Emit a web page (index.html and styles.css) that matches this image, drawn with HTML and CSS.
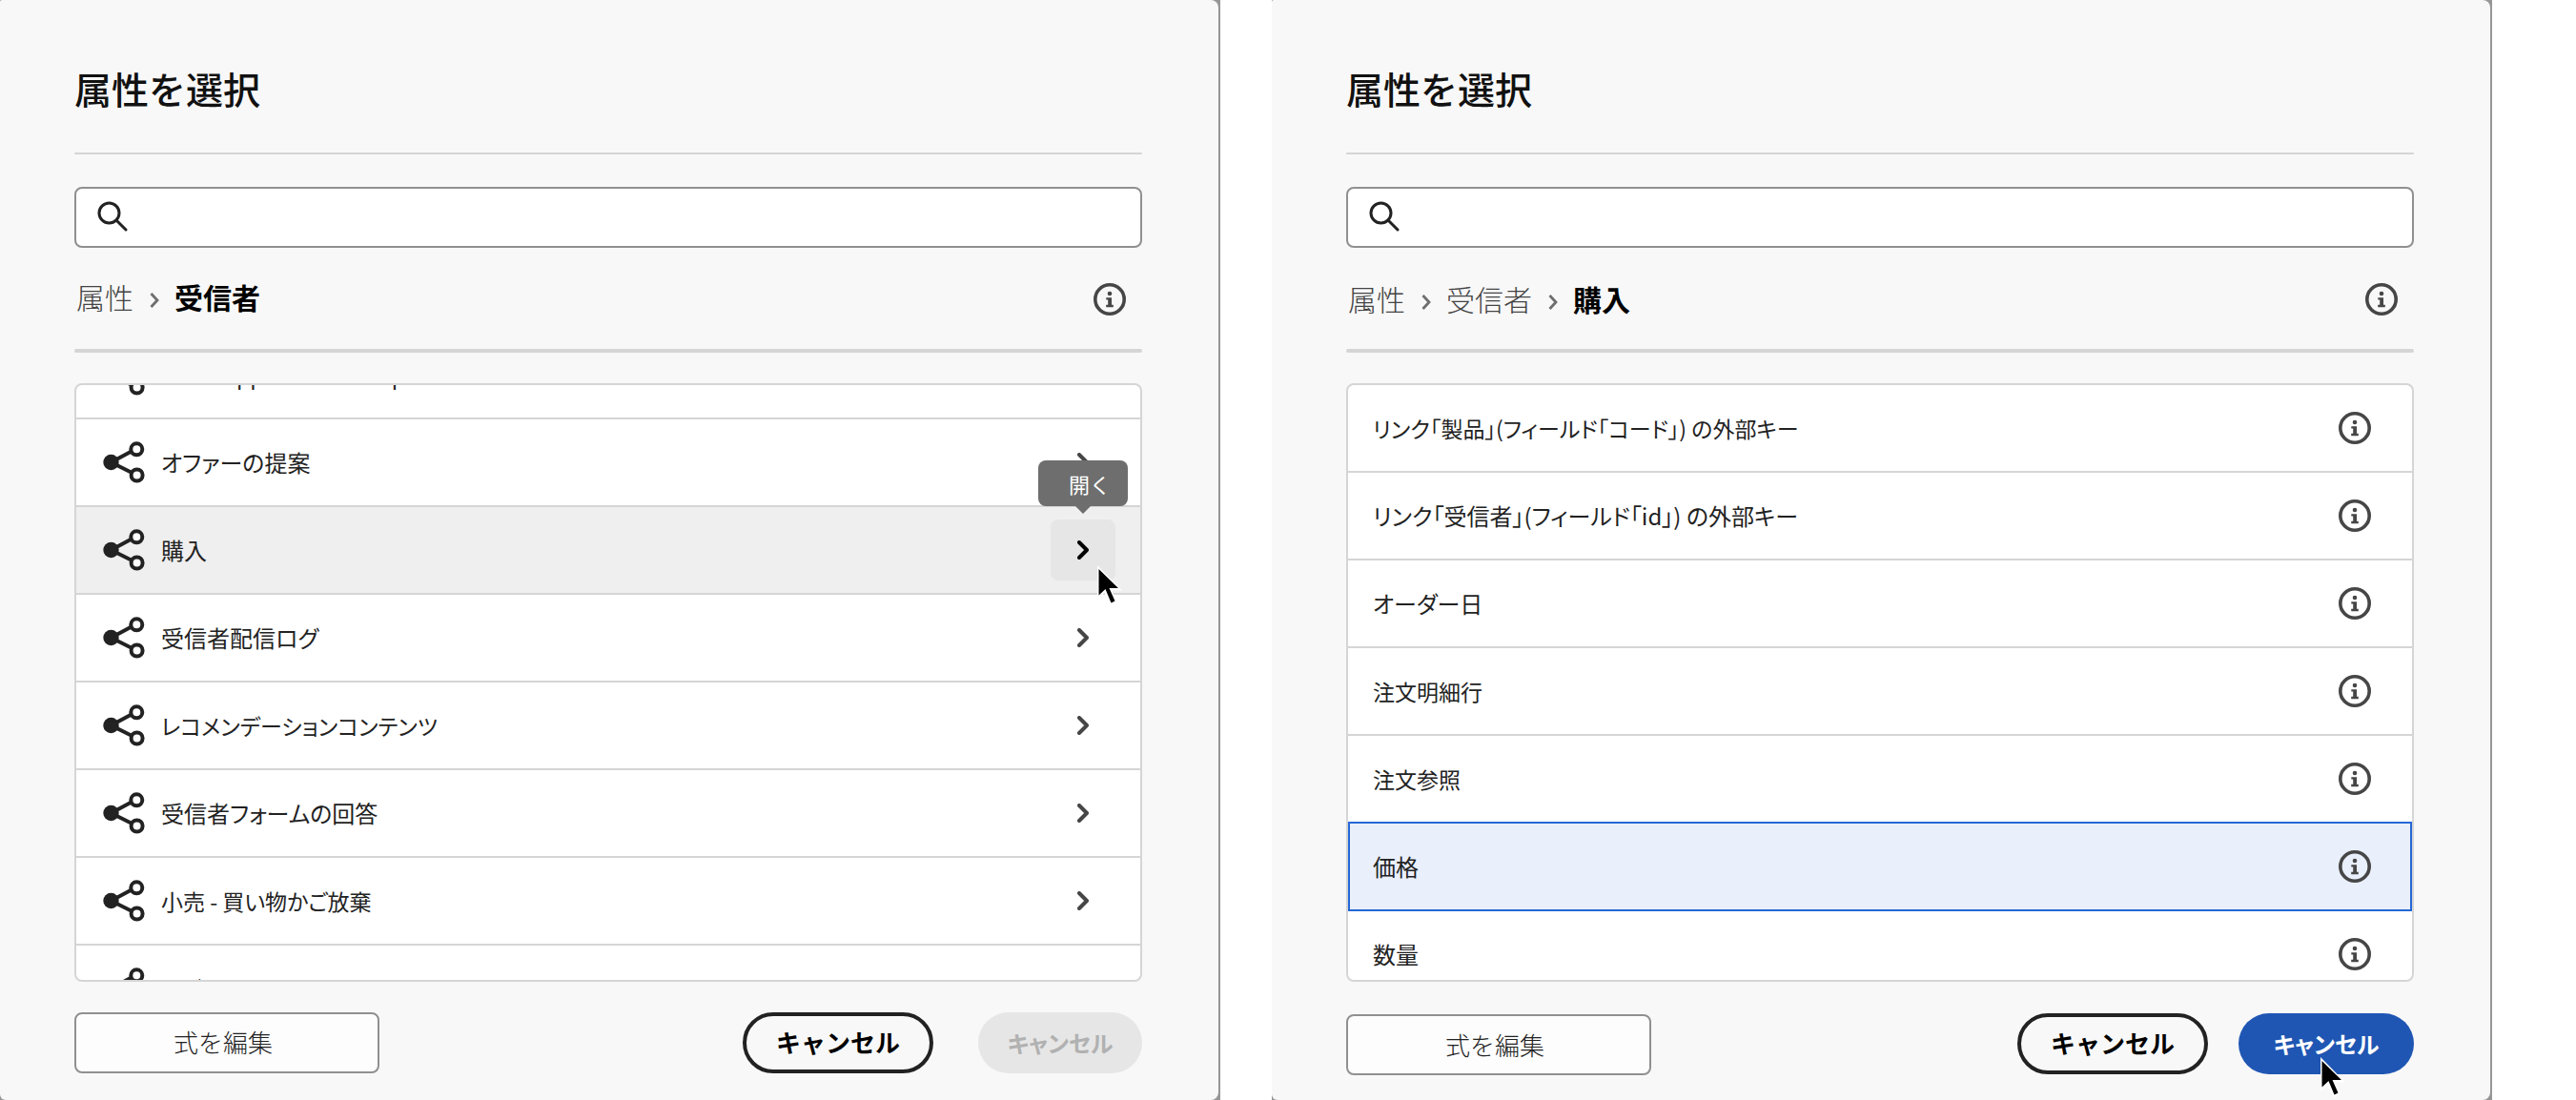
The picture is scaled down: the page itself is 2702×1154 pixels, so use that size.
FILE: index.html
```html
<!DOCTYPE html>
<html lang="ja">
<head>
<meta charset="utf-8">
<title>属性を選択</title>
<link rel="stylesheet" href="styles.css">
</head>
<body>
<svg class="sprite" aria-hidden="true">
  <symbol id="i-search" viewBox="0 0 32 32"><circle cx="12.500" cy="12.500" r="10.500" fill="none" stroke="currentColor" stroke-width="3"/><path d="M20 20 30 30" fill="none" stroke="currentColor" stroke-width="3" stroke-linecap="round"/></symbol>
  <symbol id="i-info" viewBox="0 0 34 34"><circle cx="17" cy="17" r="15.200" fill="none" stroke="currentColor" stroke-width="3.600"/><circle cx="17" cy="11" r="2.300" fill="currentColor"/><path d="M13.300 15.200H19V22.800H20.800V25.300H13.200V22.800H15.200V17.600H13.300Z" fill="currentColor"/></symbol>
  <symbol id="i-share" viewBox="0 0 44 44"><path d="M8.500 22 35.500 7.500M8.500 22 35.500 35.500" stroke="currentColor" stroke-width="4" fill="none"/><circle cx="8.500" cy="22" r="8.200" fill="currentColor"/><circle class="ring" cx="35.300" cy="8.300" r="6" stroke="currentColor" stroke-width="4"/><circle class="ring" cx="35.600" cy="35.500" r="6" stroke="currentColor" stroke-width="4"/></symbol>
  <symbol id="i-open" viewBox="0 0 12 20"><path d="M2 2 10 10 2 18" fill="none" stroke="currentColor" stroke-width="4" stroke-linecap="round" stroke-linejoin="round"/></symbol>
  <symbol id="i-crumb" viewBox="0 0 10 16"><path d="M1.500 1 8 8 1.500 15" fill="none" stroke="currentColor" stroke-width="2.800"/></symbol>
  <symbol id="i-cursor" viewBox="0 0 30 46"><path d="M2 2V38L9.500 31 15.500 44 22.500 40.500 17 28.500H28Z" fill="#fff"/><path d="M3.500 6V33.500L10.500 27 16.500 41.500 20.500 39.500 14.500 26H24Z" fill="#000"/></symbol>
</svg>

<main class="stage">
  <section class="panel">
    <div class="sheet">
      <h1 class="title">属性を選択</h1>
      <hr class="rule">
      <label class="search"><svg class="search-icon"><use href="#i-search"/></svg><input type="search" aria-label="検索"></label>
      <div class="path">
        <nav class="crumbs">
          <a href="#">属性</a><svg class="crumb-icon"><use href="#i-crumb"/></svg><strong>受信者</strong>
        </nav>
        <button class="icon-button" type="button" aria-label="情報"><svg class="info-icon"><use href="#i-info"/></svg></button>
      </div>
      <hr class="rule thick">
      <div class="frame">
        <ul class="list scrolled">
          <li class="row small"><svg class="share-icon"><use href="#i-share"/></svg><span class="name">Whatsapp Unread Recipients</span></li>
          <li class="row"><svg class="share-icon"><use href="#i-share"/></svg><span class="name">オファーの提案</span><button class="open" type="button" aria-label="開く"><svg class="open-icon"><use href="#i-open"/></svg></button></li>
          <li class="row hovered"><svg class="share-icon"><use href="#i-share"/></svg><span class="name">購入</span><span class="anchor"><button class="open active" type="button" aria-label="開く"><svg class="open-icon"><use href="#i-open"/></svg></button><span class="tooltip" role="tooltip">開く</span><svg class="cursor on-open"><use href="#i-cursor"/></svg></span></li>
          <li class="row"><svg class="share-icon"><use href="#i-share"/></svg><span class="name">受信者配信ログ</span><button class="open" type="button" aria-label="開く"><svg class="open-icon"><use href="#i-open"/></svg></button></li>
          <li class="row small"><svg class="share-icon"><use href="#i-share"/></svg><span class="name">レコメンデーションコンテンツ</span><button class="open" type="button" aria-label="開く"><svg class="open-icon"><use href="#i-open"/></svg></button></li>
          <li class="row"><svg class="share-icon"><use href="#i-share"/></svg><span class="name">受信者フォームの回答</span><button class="open" type="button" aria-label="開く"><svg class="open-icon"><use href="#i-open"/></svg></button></li>
          <li class="row small"><svg class="share-icon"><use href="#i-share"/></svg><span class="name">小売 - 買い物かご放棄</span><button class="open" type="button" aria-label="開く"><svg class="open-icon"><use href="#i-open"/></svg></button></li>
          <li class="row small"><svg class="share-icon"><use href="#i-share"/></svg><span class="name">サブスクリプション</span></li>
        </ul>
      </div>
      <footer class="actions">
        <button class="edit" type="button">式を編集</button>
        <button class="pill outline" type="button">キャンセル</button>
        <button class="pill confirm off" type="button" disabled>キャンセル</button>
      </footer>
    </div>
  </section>

  <section class="panel">
    <div class="sheet">
      <h1 class="title">属性を選択</h1>
      <hr class="rule">
      <label class="search"><svg class="search-icon"><use href="#i-search"/></svg><input type="search" aria-label="検索"></label>
      <div class="path">
        <nav class="crumbs deep">
          <a href="#">属性</a><svg class="crumb-icon"><use href="#i-crumb"/></svg><a href="#">受信者</a><svg class="crumb-icon"><use href="#i-crumb"/></svg><strong>購入</strong>
        </nav>
        <button class="icon-button" type="button" aria-label="情報"><svg class="info-icon"><use href="#i-info"/></svg></button>
      </div>
      <hr class="rule thick">
      <div class="frame">
        <ul class="list fields">
          <li class="row small"><span class="name">リンク「製品」(フィールド「コード」) の外部キー</span><button class="icon-button" type="button" aria-label="情報"><svg class="info-icon"><use href="#i-info"/></svg></button></li>
          <li class="row"><span class="name">リンク「受信者」(フィールド「id」) の外部キー</span><button class="icon-button" type="button" aria-label="情報"><svg class="info-icon"><use href="#i-info"/></svg></button></li>
          <li class="row"><span class="name">オーダー日</span><button class="icon-button" type="button" aria-label="情報"><svg class="info-icon"><use href="#i-info"/></svg></button></li>
          <li class="row small"><span class="name">注文明細行</span><button class="icon-button" type="button" aria-label="情報"><svg class="info-icon"><use href="#i-info"/></svg></button></li>
          <li class="row small"><span class="name">注文参照</span><button class="icon-button" type="button" aria-label="情報"><svg class="info-icon"><use href="#i-info"/></svg></button></li>
          <li class="row selected"><span class="name">価格</span><button class="icon-button" type="button" aria-label="情報"><svg class="info-icon"><use href="#i-info"/></svg></button></li>
          <li class="row"><span class="name">数量</span><button class="icon-button" type="button" aria-label="情報"><svg class="info-icon"><use href="#i-info"/></svg></button></li>
        </ul>
      </div>
      <footer class="actions ready">
        <button class="edit" type="button">式を編集</button>
        <button class="pill outline" type="button">キャンセル</button>
        <span class="anchor"><button class="pill confirm" type="button">キャンセル</button><svg class="cursor on-confirm"><use href="#i-cursor"/></svg></span>
      </footer>
    </div>
  </section>
</main>
</body>
</html>
```

FILE: styles.css
```css
* { box-sizing: border-box; }

body {
  margin: 0;
  background: #fff;
  color: #222;
  font-family: "Noto Sans CJK JP", "Noto Sans", sans-serif;
  font-size: 24px;
}

button, input { font: inherit; color: inherit; }
button { margin: 0; padding: 0; border: 0; background: none; }
svg { display: block; flex: none; }
.sprite { position: absolute; width: 0; height: 0; }

.stage {
  display: grid;
  grid-template-columns: 1fr 1fr;
  gap: 54px;
  min-height: 100vh;
  padding-right: 88px;
}

.panel {
  display: flex;
  padding-right: 2px;
  background: #969696;
}

.sheet {
  flex: 1;
  min-width: 0;
  padding: 58px 80px 24px 78px;
  border-radius: 2px 8px 8px 6px;
  background: #f8f8f8;
}

.title {
  margin: 0;
  height: 102px;
  color: #111;
  font-size: 39px;
  font-weight: 500;
  line-height: 68px;
}

.rule {
  height: 2px;
  margin: 0 0 34px;
  border: 0;
  border-radius: 1px;
  background: #d5d5d5;
}

.rule.thick { height: 4px; margin-bottom: 32px; border-radius: 2px; }

.search {
  display: flex;
  align-items: center;
  height: 64px;
  padding: 0 22px;
  gap: 16px;
  border: 2px solid #909090;
  border-radius: 8px;
  background: #fff;
}

.search input { flex: 1; height: 56px; border: 0; outline: 0; background: none; }
.search-icon { width: 32px; height: 32px; margin-bottom: 2px; }

.path {
  display: flex;
  justify-content: space-between;
  align-items: center;
  height: 106px;
  padding: 2px 17px 0 2px;
}

.crumbs {
  display: flex;
  align-items: center;
  padding-bottom: 6px;
  font-size: 30px;
  line-height: 44px;
}

.crumbs.deep { padding-bottom: 2px; }
.crumbs a { color: #444; font-weight: 300; text-decoration: none; }
.crumbs strong { color: #000; font-weight: 700; }
.crumb-icon { width: 10px; height: 16px; margin: 8px 16px 0 17px; color: #6e6e6e; }

.icon-button { flex: none; color: #464646; }
.info-icon { width: 34px; height: 34px; }

.frame {
  height: 628px;
  overflow: hidden;
  border: 2px solid #d5d5d5;
  border-radius: 8px;
  background: #fff;
}

.list { margin: 0; padding: 0; list-style: none; }
.list.scrolled { margin-top: -56px; }

.row {
  display: flex;
  align-items: center;
  height: 92px;
  padding: 0 26px 0 28px;
  border-bottom: 2px solid #d5d5d5;
}

.row .name {
  flex: 1;
  line-height: 36px;
  font-feature-settings: "palt";
}

.small { font-size: 23px; }

.share-icon { width: 44px; height: 44px; margin-right: 17px; }
.ring { fill: #fff; }

.fields .row { padding: 0 43px 0 26px; }
.row.hovered { background: #efefef; }

.fields .selected {
  height: 94px;
  margin-top: -2px;
  padding: 0 41px 0 24px;
  border: 2px solid #2468d6;
  background: #e9effb;
}

.open {
  display: grid;
  place-items: center;
  width: 68px;
  height: 64px;
  border-radius: 8px;
  color: #464646;
}

.open.active { background: #e6e6e6; color: #000; }
.open-icon { width: 12px; height: 20px; }

.anchor { position: relative; }

.tooltip {
  position: absolute;
  bottom: 78px;
  left: -13px;
  width: 94px;
  height: 48px;
  padding-left: 32px;
  border-radius: 8px;
  background: #6e6e6e;
  color: #fff;
  font-size: 22px;
  line-height: 48px;
}

.tooltip::after {
  content: "";
  position: absolute;
  top: 48px;
  left: 39px;
  border: 8px solid transparent;
  border-top-color: #6e6e6e;
  border-bottom: 0;
}

.cursor { position: absolute; width: 30px; height: 46px; }
.on-open { top: 46px; left: 47px; }
.on-confirm { top: 44px; left: 84px; }

.actions {
  display: flex;
  align-items: center;
  padding-top: 32px;
}

.edit {
  width: 320px;
  height: 64px;
  margin-right: auto;
  padding: 0 8px 4px 0;
  border: 2px solid #909090;
  border-radius: 8px;
  background: #fdfdfd;
  font-size: 26px;
  font-weight: 300;
}

.pill { height: 64px; border-radius: 32px; font-weight: 700; }

.outline {
  width: 200px;
  margin-right: 47px;
  padding-bottom: 4px;
  border: 4px solid #222;
  color: #000;
  font-size: 26px;
}

.confirm {
  width: 184px;
  padding-bottom: 2px;
  background: #1f56b3;
  color: #fff;
  font-feature-settings: "palt";
}

.off { width: 172px; background: #e6e6e6; color: #b1b1b1; }
.ready .edit { margin-top: 2px; padding-bottom: 2px; }
.ready .outline { margin-right: 32px; }
```
